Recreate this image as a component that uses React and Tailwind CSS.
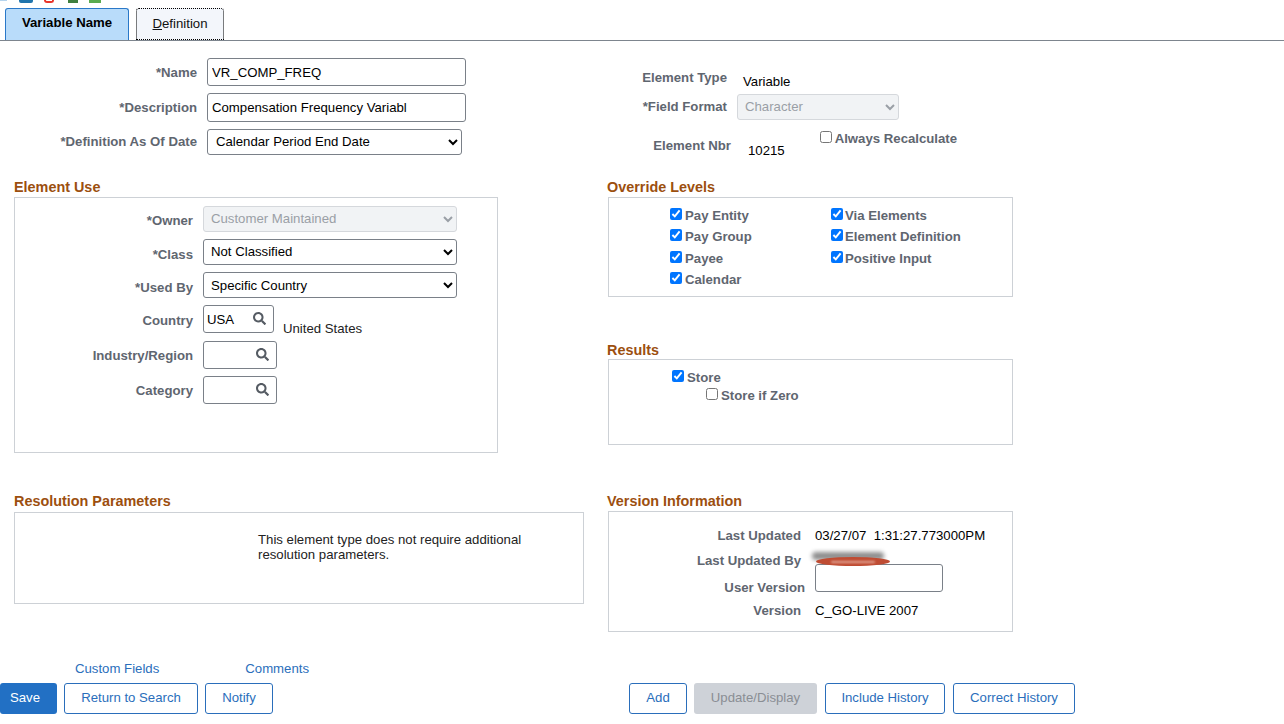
import { FaSearch } from 'react-icons/fa';

const Heading = ({ children }) => (
    <h3 className="text-[14.4px] leading-[16px] font-bold text-[#9c4f0f]">{children}</h3>
);

const Label = ({ width, children, className = '' }) => (
    <label className={`shrink-0 text-right text-[13.2px] leading-[16px] font-bold text-[#5f6670] ${width} ${className}`}>
        {children}
    </label>
);

const Check = ({ label, checked = false, tight = false }) => (
    <label className={`flex h-[16px] items-start text-[13.2px] leading-[16px] font-bold text-[#5f6670] ${tight ? 'gap-[2px]' : 'gap-[3px]'}`}>
        <input type="checkbox" defaultChecked={checked} className="m-0 mt-[1px] h-[12px] w-[12px] accent-[#0075ff]" />
        <span className="pt-[1px]">{label}</span>
    </label>
);

const Select = ({ value, width, disabled = false }) => (
    <select
        defaultValue={value}
        disabled={disabled}
        className={`h-[26px] rounded-[3px] border px-[3px] pb-[1px] text-[13.2px] ${width} ${
            disabled
                ? 'border-[#d5d8dc] bg-[#f1f3f5] text-[#9a9fa6] opacity-100'
                : 'border-[#7a8088] bg-white text-black'
        }`}
    >
        <option>{value}</option>
    </select>
);

const Lookup = ({ value = '', width = 'w-[74px]' }) => (
    <div className={`flex h-[28px] items-center justify-between rounded-[3px] border border-[#7a8088] bg-white pr-[7px] pl-[3px] text-[13.2px] text-black ${width}`}>
        <span className="pt-[2px]">{value}</span>
        <FaSearch size={13} className="mb-[1px] text-[#555b63]" />
    </div>
);

const Button = ({ children, width, primary = false, disabled = false }) => {
    let tone = 'border border-[#2a6ebb] bg-white text-[#2a6ebb]';
    if (primary) tone = 'bg-[#2270c4] pr-[7px] text-white';
    if (disabled) tone = 'bg-[#ced2d8] text-[#8a8e94]';
    return (
        <button className={`h-[31px] rounded-[3px] pb-[2px] text-center text-[13.2px] ${width} ${tone}`}>{children}</button>
    );
};

const UseRow = ({ label, className = '', children, labelClass = '' }) => (
    <div className={`flex items-center gap-[10px] ${className}`}>
        <Label width="w-[178px]" className={labelClass}>{label}</Label>
        {children}
    </div>
);

const VersionRow = ({ label, className = '', children }) => (
    <div className={`flex items-center gap-[14px] ${className}`}>
        <Label width="w-[192px]">{label}</Label>
        {children}
    </div>
);

const App = () => {
    return (
        <div className="flex h-[724px] w-[1284px] flex-col overflow-hidden bg-white font-['Liberation_Sans',Arial,sans-serif]">
            {/* icons cut off by the top of the window */}
            <div className="flex h-[8px] items-start overflow-hidden">
                <div className="h-[1px] w-[7px] bg-[#b5d4ee]" />
                <div className="ml-[12px] h-[3px] w-[14px] rounded-b-[2px] bg-[#1f74ad]" />
                <div className="ml-[11px] h-[3px] w-[10px] rounded-b-full border-x-2 border-b-2 border-[#e8342b]" />
                <div className="ml-[14px] h-[3px] w-[10px] bg-[#3f7f3f]" />
                <div className="ml-[11px] h-[3px] w-[12px] bg-[#5aab4f]" />
            </div>

            {/* tabs */}
            <div className="flex h-[33px] items-end gap-[7px] border-b border-[#7d858e] pl-[5px]">
                <div className="flex h-[32px] w-[124px] items-center justify-center rounded-t-[3px] border border-b-0 border-[#2a78c8] bg-[#b9dcfa] pb-[3px] text-[13.2px] font-bold text-black">
                    Variable Name
                </div>
                <div className="flex h-[32px] w-[88px] items-center justify-center rounded-t-[3px] border border-dotted border-black bg-[#f3f6fb] text-[13.2px] text-[#111]">
                    <span><u>D</u>efinition</span>
                </div>
            </div>

            <div className="flex">
                {/* left column */}
                <div className="w-[607px] shrink-0">
                    <div className="mt-[17px] flex flex-col">
                        <div className="flex items-center gap-[10px]">
                            <Label width="w-[197px]" className="mt-[2px]">*Name</Label>
                            <input readOnly value="VR_COMP_FREQ" className="h-[28px] w-[259px] rounded-[3px] border border-[#7a8088] px-[4px] text-[13.2px] text-black" />
                        </div>
                        <div className="mt-[7px] flex items-center gap-[10px]">
                            <Label width="w-[197px]">*Description</Label>
                            <input readOnly value="Compensation Frequency Variabl" className="h-[29px] w-[259px] rounded-[3px] border border-[#7a8088] px-[4px] text-[13.2px] text-black" />
                        </div>
                        <div className="mt-[7px] flex items-center gap-[10px]">
                            <Label width="w-[197px]">*Definition As Of Date</Label>
                            <Select value="Calendar Period End Date" width="w-[255px] pl-[4px]" />
                        </div>
                    </div>

                    <div className="mt-[24px] ml-[14px]">
                        <Heading>Element Use</Heading>
                        <div className="mt-[2px] flex h-[256px] w-[484px] flex-col border border-[#cdd1d6] pt-[8px]">
                            <UseRow label="*Owner" className="h-[26px]" labelClass="mt-[3px]">
                                <Select value="Customer Maintained" width="w-[254px]" disabled />
                            </UseRow>
                            <UseRow label="*Class" className="mt-[7px] h-[26px]" labelClass="mt-[5px]">
                                <Select value="Not Classified" width="w-[254px]" />
                            </UseRow>
                            <UseRow label="*Used By" className="mt-[7px] h-[26px]" labelClass="mt-[5px]">
                                <Select value="Specific Country" width="w-[254px] pt-[2px]" />
                            </UseRow>
                            <UseRow label="Country" className="mt-[7px] h-[28px]" labelClass="mt-[4px]">
                                <Lookup value="USA" width="w-[71px]" />
                                <span className="mt-[20px] -ml-[1px] text-[13.2px] leading-[16px] text-[#222]">United States</span>
                            </UseRow>
                            <UseRow label="Industry/Region" className="mt-[8px] h-[28px]" labelClass="mt-[2px]">
                                <Lookup />
                            </UseRow>
                            <UseRow label="Category" className="mt-[7px] h-[28px]" labelClass="mt-[2px]">
                                <Lookup />
                            </UseRow>
                        </div>
                    </div>

                    <div className="mt-[40px] ml-[14px]">
                        <Heading>Resolution Parameters</Heading>
                        <div className="mt-[3px] h-[92px] w-[570px] border border-[#cdd1d6] pt-[19px] pl-[243px] text-[13.2px] leading-[15px] text-[#222]">
                            <p className="w-[300px]">This element type does not require additional resolution parameters.</p>
                        </div>
                    </div>
                </div>

                {/* right column */}
                <div className="w-[406px] shrink-0">
                    <div className="mt-[25px] h-[100px]">
                        <div className="flex items-center gap-[16px]">
                            <Label width="w-[120px]">Element Type</Label>
                            <span className="mt-[8px] text-[13.2px] leading-[16px] text-black">Variable</span>
                        </div>
                        <div className="mt-[4px] flex items-center gap-[10px]">
                            <Label width="w-[120px]">*Field Format</Label>
                            <Select value="Character" width="w-[162px]" disabled />
                        </div>
                        <div className="mt-[10px] flex items-start">
                            <Label width="w-[124px]" className="mt-[8px]">Element Nbr</Label>
                            <span className="mt-[13px] ml-[17px] text-[13.2px] leading-[16px] text-black">10215</span>
                            <div className="ml-[35px]"><Check label="Always Recalculate" /></div>
                        </div>
                    </div>

                    <div className="mt-[13px]">
                        <Heading>Override Levels</Heading>
                        <div className="mt-[2px] ml-[1px] grid h-[100px] w-[405px] grid-cols-[161px_1fr] content-start gap-y-[5.4px] border border-[#cdd1d6] pt-[9px] pl-[61px]">
                            <Check checked label="Pay Entity" />
                            <Check checked tight label="Via Elements" />
                            <Check checked label="Pay Group" />
                            <Check checked tight label="Element Definition" />
                            <Check checked label="Payee" />
                            <Check checked tight label="Positive Input" />
                            <Check checked label="Calendar" />
                        </div>
                    </div>

                    <div className="mt-[45px]">
                        <Heading>Results</Heading>
                        <div className="mt-[1px] ml-[1px] h-[86px] w-[405px] border border-[#cdd1d6] pt-[9px] pl-[63px]">
                            <Check checked label="Store" />
                            <div className="mt-[2px] ml-[34px]"><Check label="Store if Zero" /></div>
                        </div>
                    </div>

                    <div className="mt-[48px]">
                        <Heading>Version Information</Heading>
                        <div className="mt-[2px] ml-[1px] h-[121px] w-[405px] border border-[#cdd1d6] pt-[16px] text-[13.2px] leading-[16px] text-black">
                            <VersionRow label="Last Updated">
                                <span>03/27/07&nbsp;&nbsp;1:31:27.773000PM</span>
                            </VersionRow>
                            <VersionRow label="Last Updated By" className="relative z-10 mt-[9px]">
                                {/* name scribbled over in the screenshot */}
                                <div className="absolute top-[-1px] left-[203px] h-[8px] w-[72px] rounded-full bg-[#8d8d8d] blur-[2px]" />
                                <div className="absolute top-[4px] left-[207px] flex h-[9px] w-[74px] items-center justify-center rounded-[50%] bg-[#bf4c33]">
                                    <div className="h-[2px] w-[44px] rounded-full bg-[#e3a594] blur-[1px]" />
                                </div>
                            </VersionRow>
                            <div className="mt-[-5px] flex items-end">
                                <Label width="w-[196px]" className="-mb-[4px]">User Version</Label>
                                <input readOnly className="ml-[10px] h-[28px] w-[128px] rounded-[3px] border border-[#7a8088]" />
                            </div>
                            <VersionRow label="Version" className="mt-[11px]">
                                <span>C_GO-LIVE 2007</span>
                            </VersionRow>
                        </div>
                    </div>
                </div>
            </div>

            {/* bottom bar */}
            <div className="mt-[29px] flex gap-[86px] pl-[75px] text-[13.2px] leading-[16px] text-[#2a6ebb]">
                <a>Custom Fields</a>
                <a>Comments</a>
            </div>
            <div className="mt-[6px] flex">
                <div className="flex w-[629px] shrink-0 gap-[7px]">
                    <Button primary width="w-[57px]">Save</Button>
                    <Button width="w-[134px]">Return to Search</Button>
                    <Button width="w-[68px]">Notify</Button>
                </div>
                <div className="flex">
                    <Button width="w-[58px]">Add</Button>
                    <div className="ml-[7px]"><Button disabled width="w-[123px]">Update/Display</Button></div>
                    <div className="ml-[8px]"><Button width="w-[120px]">Include History</Button></div>
                    <div className="ml-[8px]"><Button width="w-[122px]">Correct History</Button></div>
                </div>
            </div>
        </div>
    );
};

export default App;
